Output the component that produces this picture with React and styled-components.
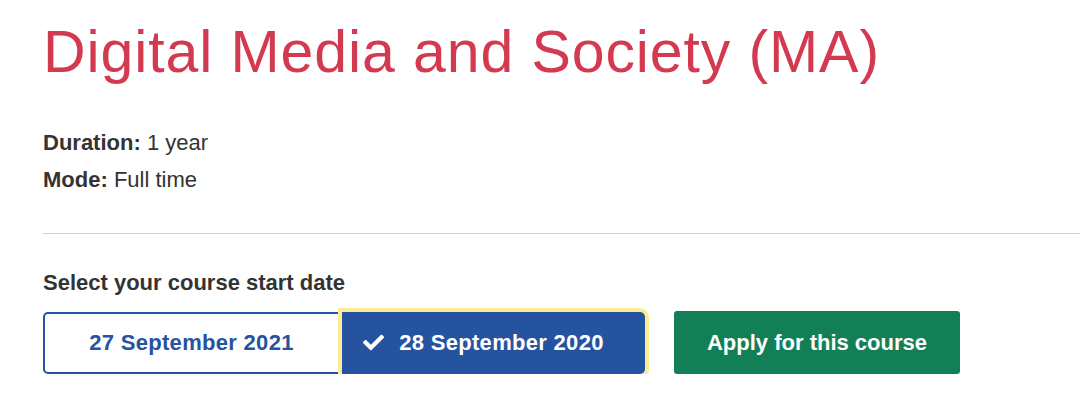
import React from "react";
import styled, { createGlobalStyle } from "styled-components";
import { FaCheck } from "react-icons/fa";

const Global = createGlobalStyle`
  html, body { margin: 0; padding: 0; background: #fff; }
  body { font-family: "Liberation Sans", Arial, sans-serif; color: #333; }
`;

const Page = styled.div`
  padding: 17px 0 0 43px;
`;

const Title = styled.h1`
  margin: 0;
  font-size: 59px;
  line-height: 70px;
  font-weight: 400;
  letter-spacing: 0.9px;
  color: #d33a4f;
`;

const Facts = styled.div`
  margin-top: 37px;
  font-size: 22px;
  line-height: 37px;
  color: #333;
`;

const Fact = styled.div``;

const Label = styled.strong`
  font-weight: 700;
`;

const Rule = styled.hr`
  margin: 35px 0 0 0;
  border: 0;
  border-top: 1px solid #d4d4d4;
`;

const Prompt = styled.div`
  margin-top: 36px;
  font-size: 22px;
  line-height: 26px;
  font-weight: 700;
  color: #333;
`;

const Row = styled.div`
  margin-top: 15px;
  display: flex;
  align-items: center;
`;

const DateGroup = styled.div`
  display: flex;
`;

const DateButton = styled.button`
  box-sizing: border-box;
  height: 62px;
  width: ${(p) => (p.$selected ? "303px" : "297px")};
  display: flex;
  align-items: center;
  justify-content: center;
  gap: 15px;
  font-family: "Liberation Sans", Arial, sans-serif;
  font-size: 22px;
  font-weight: 700;
  letter-spacing: 0.3px;
  border: 2px solid #2553a0;
  background: ${(p) => (p.$selected ? "#2553a0" : "#fff")};
  color: ${(p) => (p.$selected ? "#fff" : "#2553a0")};
  border-radius: ${(p) => (p.$first ? "5px 0 0 5px" : "0 5px 5px 0")};
  margin-left: ${(p) => (p.$selected ? "2px" : "0")};
  box-shadow: ${(p) => (p.$selected ? "0 0 0 4px #fcec95" : "none")};
  outline: none;
  padding: ${(p) => (p.$selected ? "0 20px 0 0" : "0")};
  cursor: pointer;
`;

const ApplyButton = styled.button`
  box-sizing: border-box;
  margin-left: 29px;
  height: 63px;
  width: 286px;
  border: 0;
  border-radius: 3px;
  background: #137f57;
  color: #fff;
  font-family: "Liberation Sans", Arial, sans-serif;
  font-size: 22px;
  font-weight: 700;
  cursor: pointer;
`;

export default function App() {
  return (
    <>
      <Global />
      <Page>
        <Title>Digital Media and Society (MA)</Title>
        <Facts>
          <Fact>
            <Label>Duration:</Label> 1 year
          </Fact>
          <Fact>
            <Label>Mode:</Label> Full time
          </Fact>
        </Facts>
        <Rule />
        <Prompt>Select your course start date</Prompt>
        <Row>
          <DateGroup>
            <DateButton $first>27 September 2021</DateButton>
            <DateButton $selected>
              <FaCheck size={21} />
              28 September 2020
            </DateButton>
          </DateGroup>
          <ApplyButton>Apply for this course</ApplyButton>
        </Row>
      </Page>
    </>
  );
}
